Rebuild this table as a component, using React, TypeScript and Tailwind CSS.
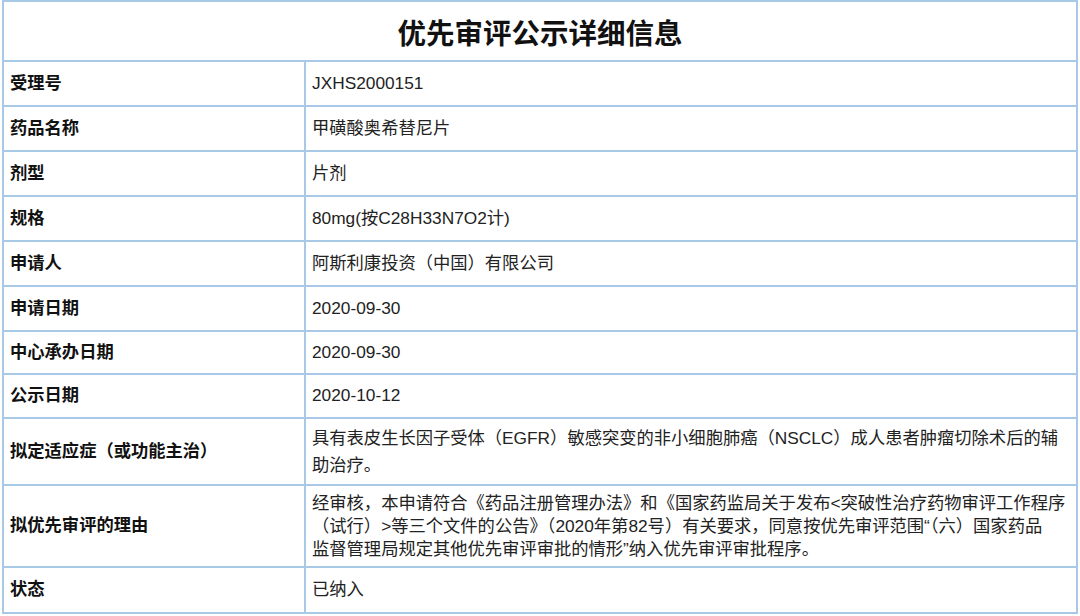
import React from 'react';

const rows: { label: string; value: React.ReactNode; h: string; lh?: string }[] = [
  { label: '受理号', value: 'JXHS2000151', h: 'h-[45px]' },
  { label: '药品名称', value: '甲磺酸奥希替尼片', h: 'h-[45px]' },
  { label: '剂型', value: '片剂', h: 'h-[45px]' },
  { label: '规格', value: '80mg(按C28H33N7O2计)', h: 'h-[45px]' },
  { label: '申请人', value: '阿斯利康投资（中国）有限公司', h: 'h-[45px]' },
  { label: '申请日期', value: '2020-09-30', h: 'h-[45px]' },
  { label: '中心承办日期', value: '2020-09-30', h: 'h-[43px]' },
  { label: '公示日期', value: '2020-10-12', h: 'h-[44px]' },
  {
    label: '拟定适应症（或功能主治）',
    value: (
      <>
        具有表皮生长因子受体（EGFR）敏感突变的非小细胞肺癌（NSCLC）成人患者肿瘤切除术后的辅
        <br />
        助治疗。
      </>
    ),
    h: 'h-[67px]',
    lh: 'leading-[27px]',
  },
  {
    label: '拟优先审评的理由',
    value: (
      <>
        经审核，本申请符合《药品注册管理办法》和《国家药监局关于发布&lt;突破性治疗药物审评工作程序
        <br />
        （试行）&gt;等三个文件的公告》（2020年第82号）有关要求，同意按优先审评范围“（六）国家药品
        <br />
        监督管理局规定其他优先审评审批的情形”纳入优先审评审批程序。
      </>
    ),
    h: 'h-[82px]',
    lh: 'leading-[23px]',
  },
  { label: '状态', value: '已纳入', h: 'h-[46px]' },
];

export default function App() {
  return (
    <div
      className="w-[1080px] h-[616px] bg-white overflow-hidden"
      style={{ fontFamily: '"Liberation Sans", "Noto Sans CJK SC", sans-serif' }}
    >
      <div className="ml-[2px] w-[1076px] border-2 border-[#a9c9e6] text-[17.3px] text-[#222]">
        {/* Title */}
        <div className="h-[58px] pt-[6px] flex items-center justify-center text-[28.5px] font-bold text-[#111]">
          优先审评公示详细信息
        </div>

        {rows.map((r) => (
          <div key={r.label} className={`flex border-t-2 border-[#a9c9e6] ${r.h}`}>
            <div className="w-[302px] shrink-0 border-r-2 border-[#a9c9e6] flex items-center pl-[6px] font-bold text-[#111]">
              {r.label}
            </div>
            <div className={`flex-1 flex items-center pl-[6px] whitespace-nowrap ${r.lh ?? ''}`}>
              <div>{r.value}</div>
            </div>
          </div>
        ))}
      </div>
    </div>
  );
}
